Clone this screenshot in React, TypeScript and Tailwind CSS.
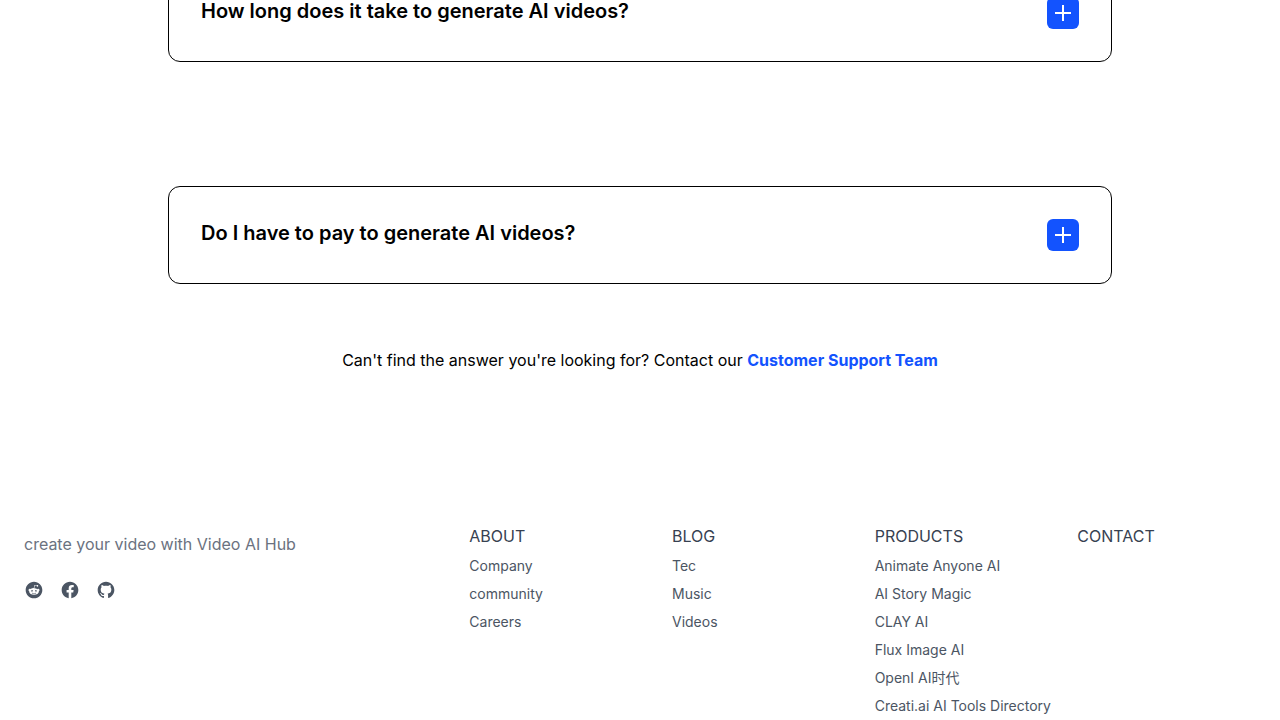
import React, { useState } from 'react';
import { RiFacebookCircleFill, RiGithubFill, RiRedditFill } from 'react-icons/ri';

interface FaqItem {
    question: string;
    answer: string;
}

interface FooterColumn {
    title: string;
    links: string[];
}

const faqs: FaqItem[] = [
    { question: 'How long does it take to generate AI videos?', answer: '' },
    { question: 'Do I have to pay to generate AI videos?', answer: '' },
];

const footerColumns: FooterColumn[] = [
    { title: 'ABOUT', links: ['Company', 'community', 'Careers'] },
    { title: 'BLOG', links: ['Tec', 'Music', 'Videos'] },
    {
        title: 'PRODUCTS',
        links: ['Animate Anyone AI', 'AI Story Magic', 'CLAY AI', 'Flux Image AI', 'OpenI AI时代', 'Creati.ai AI Tools Directory'],
    },
    { title: 'CONTACT', links: [] },
];

const socials = [
    { label: 'Reddit', Icon: RiRedditFill },
    { label: 'Facebook', Icon: RiFacebookCircleFill },
    { label: 'GitHub', Icon: RiGithubFill },
];

const FaqCard: React.FC<{ item: FaqItem }> = ({ item }) => {
    const [open, setOpen] = useState(false);

    return (
        <div className="rounded-xl border border-black p-8">
            <div className="flex items-start justify-between gap-4">
                <h3 className="text-xl font-semibold">{item.question}</h3>
                <button
                    type="button"
                    aria-label={item.question}
                    aria-expanded={open}
                    onClick={() => setOpen(!open)}
                    className="flex size-8 shrink-0 cursor-pointer items-center justify-center rounded-md bg-[#1353fe] text-white"
                >
                    <svg viewBox="0 0 16 16" className="size-4" fill="none" stroke="currentColor" strokeWidth="2">
                        <path d="M0 8h16" />
                        {!open && <path d="M8 0v16" />}
                    </svg>
                </button>
            </div>
            {open && item.answer && <p className="mt-4">{item.answer}</p>}
        </div>
    );
};

const Footer: React.FC = () => (
    <footer className="grid gap-8 px-6 md:grid-cols-3">
        <div className="pt-2">
            <p className="text-[#6b7280]">create your video with Video AI Hub</p>
            <div className="mt-6 flex gap-4">
                {socials.map(({ label, Icon }) => (
                    <a key={label} href="#" aria-label={label} className="text-[#4b5563] hover:text-gray-900">
                        <Icon className="size-5" />
                    </a>
                ))}
            </div>
        </div>
        <div className="grid grid-cols-2 md:col-span-2 md:grid-cols-4">
            {footerColumns.map(col => (
                <div key={col.title} className="pl-6">
                    <h4 className="text-[#374151]">{col.title}</h4>
                    <ul className="mt-2 space-y-2 text-sm text-[#4b5563]">
                        {col.links.map(link => (
                            <li key={link}>
                                <a href="#" className="block hover:underline">{link}</a>
                            </li>
                        ))}
                    </ul>
                </div>
            ))}
        </div>
    </footer>
);

const App: React.FC = () => (
    <div className="h-screen overflow-hidden bg-white font-['Inter','Noto_Sans_CJK_SC',sans-serif] text-black">
        <main className="mx-auto -mt-9 max-w-5xl px-10">
            <div className="flex flex-col gap-31">
                {faqs.map(item => (
                    <FaqCard key={item.question} item={item} />
                ))}
            </div>
            <p className="mt-16 mb-38 text-center">
                Can't find the answer you're looking for? Contact our{' '}
                <a href="#" className="font-bold text-[#1353fe]">Customer Support Team</a>
            </p>
        </main>
        <Footer />
    </div>
);

export default App;
